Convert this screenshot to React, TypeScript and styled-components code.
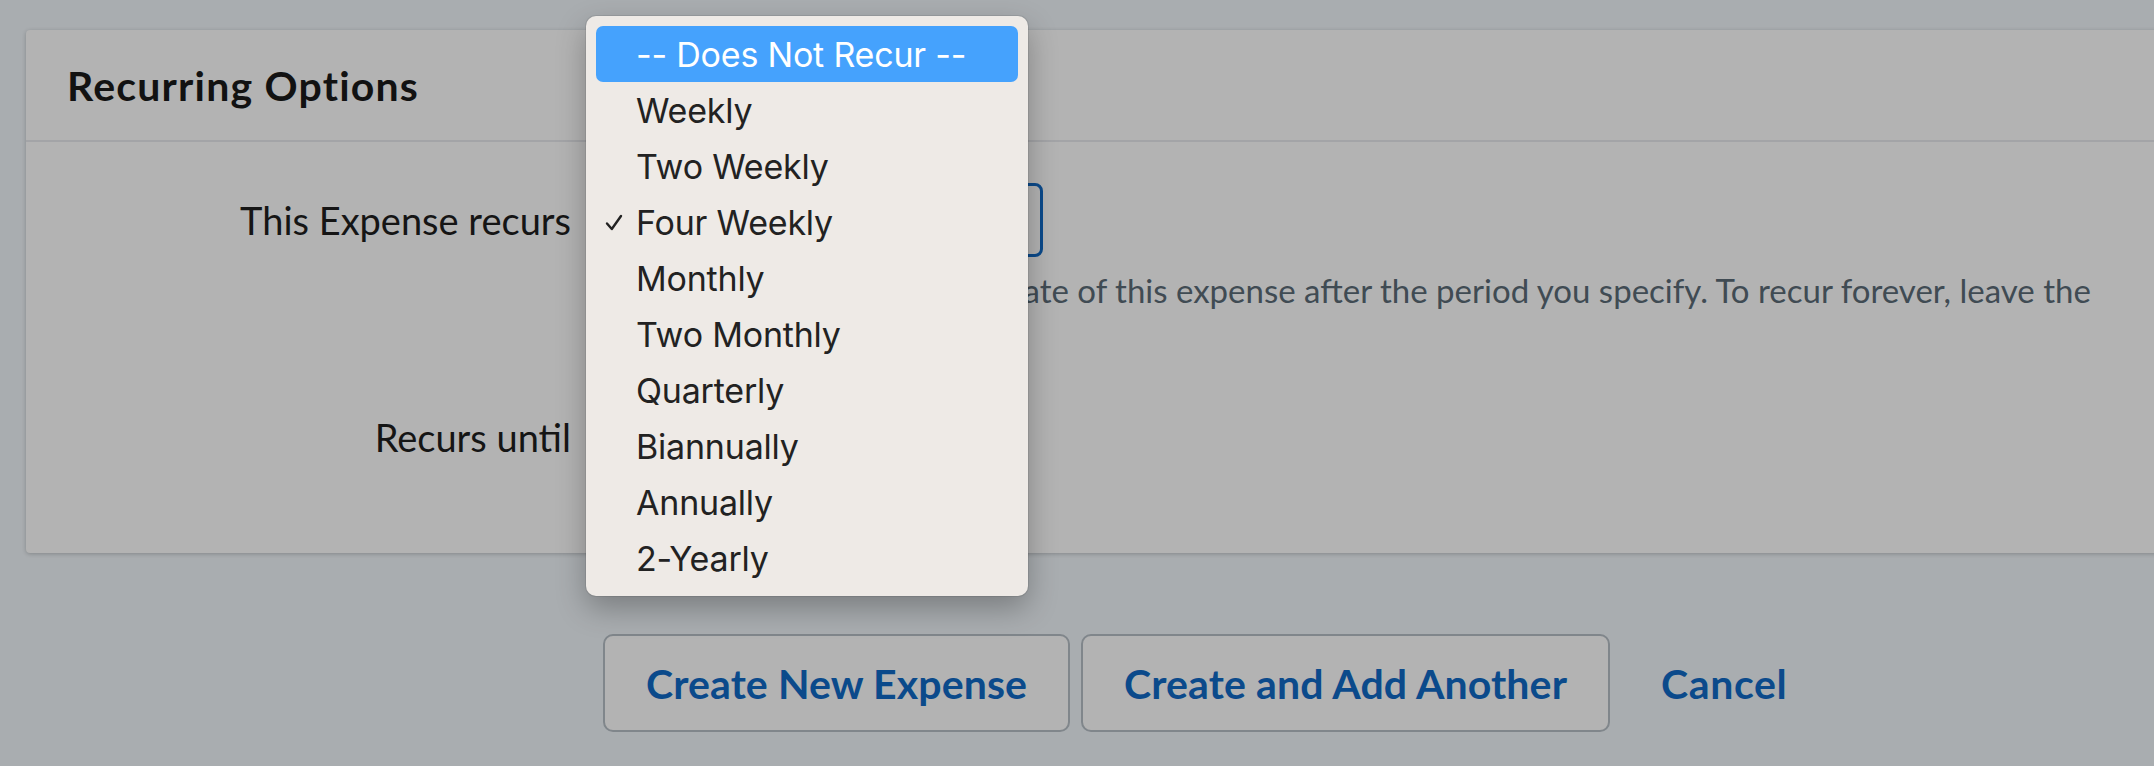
import React from "react";
import styled, { createGlobalStyle } from "styled-components";

const GlobalStyle = createGlobalStyle`
  html, body {
    margin: 0;
    padding: 0;
    background: #a9adb0;
    overflow: hidden;
  }
  body {
    font-family: Lato, "Open Sans", sans-serif;
    width: 2154px;
    height: 766px;
  }
`;

const Page = styled.div`
  position: relative;
  width: 2200px;
  height: 766px;
  padding: 30px 0 0 26px;
  box-sizing: border-box;
`;

const Card = styled.section`
  background: #b3b3b3;
  border-radius: 4px;
  box-shadow: 0 1px 4px rgba(0, 0, 0, 0.22);
`;

const CardHeader = styled.header`
  height: 110px;
  display: flex;
  align-items: center;
  padding-left: 41px;
  border-bottom: 2px solid #a3a4a7;
`;

const Title = styled.h2`
  margin: 0;
  font-size: 41px;
  letter-spacing: 1.2px;
  font-weight: 700;
  color: #121212;
`;

const FormBody = styled.div`
  display: grid;
  grid-template-columns: 545px 1fr;
  column-gap: 27px;
  padding: 41px 0 79px;
`;

const Label = styled.label<{ $top?: number }>`
  grid-column: 1;
  justify-self: end;
  align-self: start;
  margin-top: ${(p) => p.$top ?? 0}px;
  font-size: 38px;
  color: #151515;
  line-height: 74px;
`;

const Field = styled.div<{ $top?: number }>`
  grid-column: 2;
  margin-top: ${(p) => p.$top ?? 0}px;
`;

const SelectBox = styled.div`
  width: 445px;
  height: 74px;
  box-sizing: border-box;
  border: 3px solid #0b4a8b;
  border-radius: 8px;
  background: #b3b3b3;
`;

const DateBox = styled.div`
  width: 300px;
  height: 74px;
  box-sizing: border-box;
  border: 2px solid #8a8f94;
  border-radius: 8px;
`;

const Help = styled.p`
  margin: 10px 0 0;
  font-size: 33px;
  line-height: 46px;
  color: #404b53;
`;

const Actions = styled.div`
  display: flex;
  align-items: center;
  gap: 11px;
  margin-top: 81px;
  padding-left: 577px;
`;

const Button = styled.button`
  height: 98px;
  padding: 0 41px;
  box-sizing: border-box;
  border: 2px solid #80868b;
  border-radius: 10px;
  background: #b3b3b3;
  color: #0b4a8b;
  font-family: Lato, sans-serif;
  font-size: 41px;
  letter-spacing: 0.12px;
  font-weight: 700;
`;

const CancelLink = styled.a`
  margin-left: 40px;
  color: #0b4a8b;
  font-size: 41px;
  letter-spacing: 0.6px;
  font-weight: 700;
  text-decoration: none;
`;

const Menu = styled.ul`
  position: absolute;
  left: 586px;
  top: 16px;
  width: 442px;
  margin: 0;
  padding: 10px;
  box-sizing: border-box;
  list-style: none;
  background: #eeeae6;
  border-radius: 10px;
  box-shadow: 0 12px 30px rgba(0, 0, 0, 0.28), 0 0 0 1px rgba(0, 0, 0, 0.08);
`;

const MenuItem = styled.li<{ $active?: boolean }>`
  position: relative;
  height: 56px;
  display: flex;
  align-items: center;
  padding-left: 40px;
  border-radius: 7px;
  font-family: Inter, "Noto Sans", sans-serif;
  font-size: 34px;
  letter-spacing: -0.2px;
  color: ${(p) => (p.$active ? "#ffffff" : "#222222")};
  background: ${(p) => (p.$active ? "#45a2fd" : "transparent")};
`;

const Check = styled.svg`
  position: absolute;
  left: 9px;
  top: 20px;
  width: 18px;
  height: 17px;
`;

const options = [
  "-- Does Not Recur --",
  "Weekly",
  "Two Weekly",
  "Four Weekly",
  "Monthly",
  "Two Monthly",
  "Quarterly",
  "Biannually",
  "Annually",
  "2-Yearly",
];

export default function App() {
  return (
    <>
      <GlobalStyle />
      <Page>
        <Card>
          <CardHeader>
            <Title>Recurring Options</Title>
          </CardHeader>
          <FormBody>
            <Label>This Expense recurs</Label>
            <Field>
              <SelectBox />
              <Help>
                FreeAgent will create a duplicate of this expense after the period you specify. To recur forever, leave the
                <br />
                ‘Recurs until’ field blank.
              </Help>
            </Field>
            <Label $top={41}>Recurs until</Label>
            <Field $top={41}>
              <DateBox />
            </Field>
          </FormBody>
        </Card>
        <Actions>
          <Button>Create New Expense</Button>
          <Button>Create and Add Another</Button>
          <CancelLink href="#">Cancel</CancelLink>
        </Actions>
        <Menu>
          {options.map((o, i) => (
            <MenuItem key={o} $active={i === 0}>
              {i === 3 && (
                <Check viewBox="0 0 18 17">
                  <path
                    d="M2 9.5 L6.8 15 L16 2"
                    fill="none"
                    stroke="#222"
                    strokeWidth="2.4"
                    strokeLinecap="round"
                    strokeLinejoin="round"
                  />
                </Check>
              )}
              {o}
            </MenuItem>
          ))}
        </Menu>
      </Page>
    </>
  );
}
